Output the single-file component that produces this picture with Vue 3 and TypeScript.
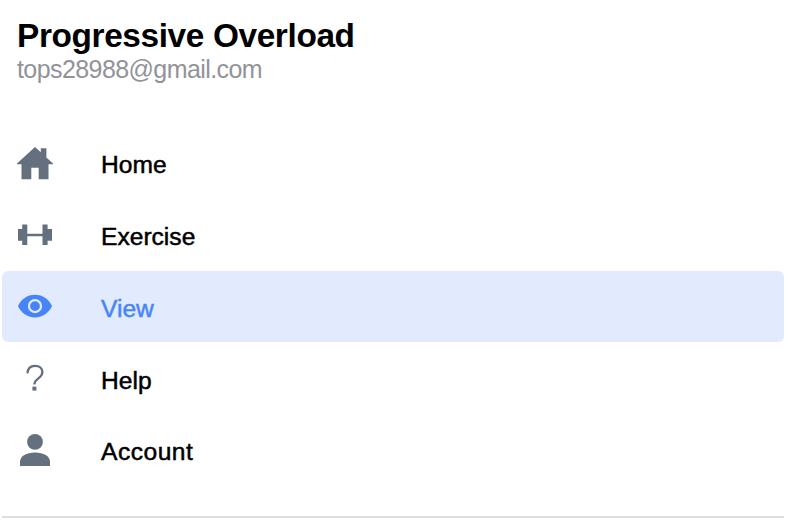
<script setup lang="ts">
import { ref } from 'vue'

type IconName = 'home' | 'exercise' | 'view' | 'help' | 'account'

interface MenuItem {
  label: string
  icon: IconName
}

const items: MenuItem[] = [
  { label: 'Home', icon: 'home' },
  { label: 'Exercise', icon: 'exercise' },
  { label: 'View', icon: 'view' },
  { label: 'Help', icon: 'help' },
  { label: 'Account', icon: 'account' },
]

const selected = ref<IconName>('view')
</script>

<template>
  <aside class="menu">
    <header class="header">
      <h1 class="title">Progressive Overload</h1>
      <p class="email">tops28988@gmail.com</p>
    </header>
    <nav class="list">
      <a
        v-for="item in items"
        :key="item.icon"
        class="item"
        :class="[item.icon, { selected: item.icon === selected }]"
        @click="selected = item.icon"
      >
        <svg class="icon" viewBox="0 0 36 36" aria-hidden="true">
          <path
            v-if="item.icon === 'home'"
            fill="currentColor"
            d="M18 2 L23.8 7.3 V3.3 H29.4 V12.4 L36 18.6 V19.2 H31.5 V34.2 H21.7 V22.7 H14.3 V34.2 H4.5 V19.2 H0 V18.6 Z"
          />
          <path
            v-else-if="item.icon === 'exercise'"
            fill="currentColor"
            d="M1 12 H5.2 V7.5 H10.3 V16.8 H25.5 V7.5 H30.6 V12 H35 V23.7 H30.6 V28 H25.5 V19.3 H10.3 V28 H5.2 V23.7 H1 Z"
          />
          <template v-else-if="item.icon === 'view'">
            <path
              fill="currentColor"
              fill-rule="evenodd"
              d="M18 6.8 C10.3 6.8 3.8 11.5 1 18.1 C3.8 24.8 10.3 29.5 18 29.5 C25.7 29.5 32.2 24.8 35 18.1 C32.2 11.5 25.7 6.8 18 6.8 Z M18 11 A7.1 7.1 0 1 1 18 25.2 A7.1 7.1 0 1 1 18 11 Z"
            />
            <circle cx="18" cy="18.1" r="4.9" fill="currentColor" />
          </template>
          <template v-else-if="item.icon === 'help'">
            <path
              fill="none"
              stroke="currentColor"
              stroke-width="2.3"
              d="M10.6 13.4 C10.4 8.7 13.2 5.8 18 5.8 C22.6 5.8 25.4 8.4 25.4 12.1 C25.4 15.2 23.7 16.8 21.4 18.4 C18.7 20.3 17.4 21.5 17.4 24.6"
            />
            <path fill="currentColor" d="M15.4 26.6 H19.4 V30.6 H15.4 Z" />
          </template>
          <template v-else>
            <circle cx="18" cy="9.9" r="7.9" fill="currentColor" />
            <path
              fill="currentColor"
              d="M3 34 V29.6 C3 24.1 9.5 20.4 18 20.4 C26.5 20.4 33 24.1 33 29.6 V34 Z"
            />
          </template>
        </svg>
        <span class="label">{{ item.label }}</span>
      </a>
    </nav>
    <hr class="divider" />
  </aside>
</template>

<style>
body {
  background: #fff;
}
</style>

<style scoped>
.menu {
  box-sizing: border-box;
  height: 524px;
  padding: 17px 6.5px 0 2px;
  font-family: 'Liberation Sans', Arial, sans-serif;
  overflow: hidden;
}

.header {
  height: 110px;
  padding-left: 15px;
  white-space: nowrap;
}

.title {
  margin: 0;
  font-size: 33.4px;
  line-height: 37px;
  font-weight: 700;
  letter-spacing: -0.38px;
  color: #000;
}

.email {
  margin: 0;
  font-size: 25px;
  line-height: 31px;
  letter-spacing: -0.58px;
  color: #929398;
}

.item {
  display: flex;
  align-items: center;
  height: 71.8px;
  padding-left: 15px;
  border-radius: 6px;
  color: #65707f;
  cursor: pointer;
}

.icon {
  flex: none;
  width: 36px;
  height: 36px;
}

.label {
  margin-left: 48px;
  padding-top: 4.6px;
  font-size: 24.6px;
  line-height: 30px;
  color: #000;
  -webkit-text-stroke: 0.5px currentColor;
}

.account .label {
  letter-spacing: 0.5px;
}

.selected {
  background: #e2ebfd;
  color: #4784fa;
}

.selected .label {
  color: #4784fa;
}

.divider {
  height: 2px;
  margin: 30px 0 0;
  border: 0;
  background: #dedede;
}
</style>
